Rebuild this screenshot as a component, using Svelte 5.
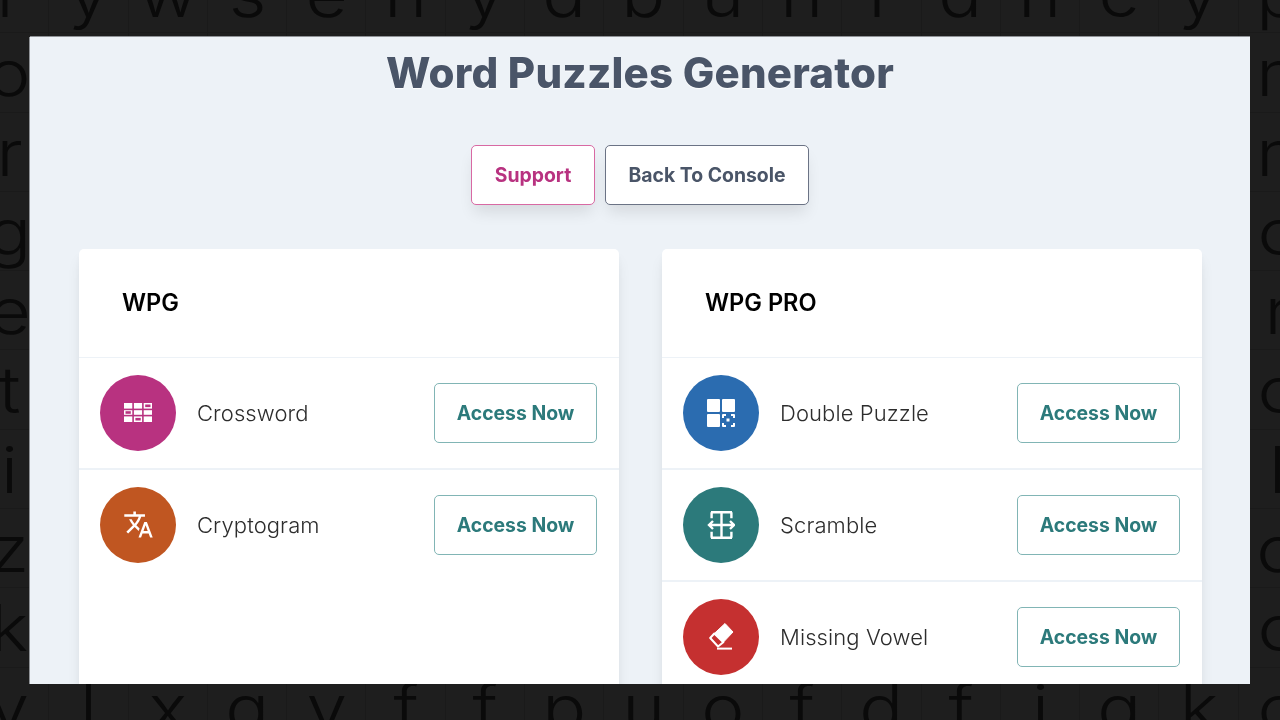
<script>
  // letter wall behind the panel, one string per row (dots are cells the panel covers)
  const wall = [
    "rywsenyabunrancyp",
    "o...............n",
    "r...............n",
    "g...............c",
    "e...............r",
    "t...............c",
    "i...............l",
    "z...............o",
    "k...............c",
    "vlxgvffpuofdfigkc"
  ];
  const letters = wall.flatMap((row) => row.split(""));

  const free = [{ name: "Crossword", color: "#b83280", icon: "crossword" }, { name: "Cryptogram", color: "#c05621", icon: "translate" }];
  const pro = [
    { name: "Double Puzzle", color: "#2b6cb0", icon: "double" },
    { name: "Scramble", color: "#2c7a7b", icon: "scramble" },
    { name: "Missing Vowel", color: "#c53030", icon: "eraser" }
  ];
  const cards = [{ title: "WPG", items: free }, { title: "WPG PRO", items: pro }];
</script>

<div class="wall" aria-hidden="true">
  {#each letters as letter}
    <span class="cell">
      {#if letter !== "."}<span class="glyph">{letter}</span>{/if}
    </span>
  {/each}
</div>

<div class="stage">
  <main class="panel">
    <h1>Word Puzzles Generator</h1>
    <div class="actions">
      <button class="btn support">Support</button>
      <button class="btn console">Back To Console</button>
    </div>
    <div class="cards">
      {#each cards as card}
        <section class="card">
          <h2>{card.title}</h2>
          {#each card.items as item}
            <div class="row">
              <span class="badge" style="background: {item.color}">
                {#if item.icon === "crossword"}
                  <svg width="28" height="19" viewBox="0 0 28 19" fill="#fff">
                    <rect x="0" y="0" width="8.3" height="5.6" />
                    <rect x="9.9" y="0" width="8.2" height="5.6" />
                    <rect x="19.7" y="0" width="8.3" height="5.6" />
                    <rect x="0" y="7.2" width="8.3" height="4.6" />
                    <rect x="9.9" y="7.2" width="8.2" height="4.6" />
                    <rect x="19.7" y="7.2" width="8.3" height="4.6" />
                    <rect x="0" y="13.4" width="8.3" height="5.6" />
                    <rect x="9.9" y="13.4" width="8.2" height="5.6" />
                    <rect x="19.7" y="13.4" width="8.3" height="5.6" />
                    <rect x="21.2" y="1.5" width="5.3" height="2.6" fill={item.color} />
                    <rect x="1.5" y="8.2" width="5.3" height="2.6" fill={item.color} />
                    <rect x="11.4" y="14.9" width="5.3" height="2.6" fill={item.color} />
                  </svg>
                {:else if item.icon === "translate"}
                  <svg width="31" height="31" viewBox="0 0 24 24" fill="#fff">
                    <path d="M12.87 15.07l-2.54-2.51.03-.03c1.74-1.94 2.98-4.17 3.71-6.53H17V4h-7V2H8v2H1v1.99h11.17C11.5 7.92 10.44 9.75 9 11.35 8.07 10.32 7.3 9.19 6.69 8h-2c.73 1.63 1.73 3.17 2.98 4.56l-5.09 5.02L4 19l5-5 3.11 3.11.76-2.04zM18.5 10h-2L12 22h2l1.12-3h4.75L21 22h2l-4.5-12zm-2.62 7l1.62-4.33L19.12 17h-3.24z" />
                  </svg>
                {:else if item.icon === "double"}
                  <svg width="28" height="28" viewBox="0 0 28 28" fill="#fff">
                    <rect x="0" y="0" width="13" height="13" rx="1" />
                    <rect x="15" y="0" width="13" height="13" rx="1" />
                    <rect x="0" y="15" width="13" height="13" rx="1" />
                    <path d="M16 15h3v2h-2v2h-2v-3a1 1 0 0 1 1-1zM24 15h3a1 1 0 0 1 1 1v3h-2v-2h-2zM15 24h2v2h2v2h-3a1 1 0 0 1-1-1zM26 24h2v3a1 1 0 0 1-1 1h-3v-2h2z" />
                    <rect x="19.5" y="19.5" width="3" height="3" />
                  </svg>
                {:else if item.icon === "scramble"}
                  <svg width="28" height="28" viewBox="0 0 28 28" fill="none" stroke="#fff" stroke-width="2.4">
                    <path d="M4 1.2h21M4 26.8h21M14.5 1.2v25.6M4.6 1.2v6M24.4 1.2v6M4.6 20.8v6M24.4 20.8v6" />
                    <path d="M2 14h25M6 10l-4 4 4 4M23 10l4 4-4 4" />
                  </svg>
                {:else}
                  <svg width="25" height="27" viewBox="0 0 25 27" fill="none" stroke="#fff">
                    <path d="M16 .5L24 9 14.3 19.3 5.3 10.5z" fill="#fff" stroke-width="1" stroke-linejoin="round" />
                    <path d="M5.3 10.5L1.2 15 9 23.5l5.3-4.2z" stroke-width="2" stroke-linejoin="round" />
                    <path d="M8 25.6h15" stroke-width="2" />
                  </svg>
                {/if}
              </span>
              <span class="name">{item.name}</span>
              <button class="btn access">Access Now</button>
            </div>
          {/each}
        </section>
      {/each}
    </div>
  </main>
</div>

<style>
  :global(body) {
    margin: 0;
    background: #1e1e1e;
    overflow: hidden;
    font-family: Inter, "Open Sans", sans-serif;
  }

  .wall {
    position: fixed;
    left: -30px;
    top: -46px;
    display: grid;
    grid-template-columns: repeat(17, 79.3px);
    grid-auto-rows: 79.3px;
  }

  .cell {
    box-sizing: border-box;
    border-right: 1px solid #1a1a1a;
    border-bottom: 1px solid #1a1a1a;
    text-align: center;
    font-size: 64px;
    font-weight: 300;
    line-height: 79px;
    color: #0a0a0a;
    font-feature-settings: "cv11";
  }

  .glyph {
    display: inline-block;
    transform: scaleX(1.14);
  }

  .stage {
    position: relative;
    box-sizing: border-box;
    height: 720px;
    padding: 37px 30px 36px;
  }

  .panel {
    height: 100%;
    overflow: hidden;
    background: #edf2f7;
    box-shadow: 0 -1px 0 #8f9296, -1px 0 0 #8f9296;
  }

  h1 {
    margin: 0;
    padding-top: 8px;
    text-align: center;
    font-size: 42px;
    line-height: 56px;
    font-weight: 800;
    letter-spacing: 0.2px;
    color: #4a5568;
    text-shadow: 0 1px 1px #fff;
  }

  .actions {
    display: flex;
    justify-content: center;
    gap: 10px;
    margin-top: 44px;
  }

  .btn {
    box-sizing: border-box;
    height: 60px;
    padding: 0;
    background: #fff;
    border: 1px solid;
    border-radius: 5px;
    font-family: inherit;
    font-size: 19.4px;
    font-weight: 700;
  }

  .support {
    width: 124px;
    color: #b83280;
    border-color: #d869a3;
    box-shadow: 0 10px 15px -3px rgba(0, 0, 0, 0.1);
  }

  .console {
    width: 204px;
    color: #4a5568;
    border-color: #6b7385;
    box-shadow: 0 10px 15px -3px rgba(0, 0, 0, 0.1);
  }

  .cards {
    display: grid;
    grid-template-columns: 540px 540px;
    gap: 43px;
    padding: 0 49px;
    margin-top: 44px;
  }

  .card {
    min-height: 500px;
    background: #fff;
    border-radius: 5px;
    box-shadow: 0 10px 15px -3px rgba(0, 0, 0, 0.1), 0 4px 6px -2px rgba(0, 0, 0, 0.05);
  }

  h2 {
    box-sizing: border-box;
    height: 109px;
    margin: 0;
    padding: 0 43px;
    border-bottom: 1px solid #edf2f7;
    font-size: 23.6px;
    font-weight: 600;
    line-height: 107px;
    color: #000;
  }

  .row {
    box-sizing: border-box;
    display: flex;
    align-items: center;
    height: 112px;
    padding: 0 22px 1px 21px;
    border-bottom: 2px solid #edf2f7;
  }

  .row:last-child {
    border-bottom: 0;
    height: 110px;
  }

  .badge {
    display: flex;
    align-items: center;
    justify-content: center;
    flex: none;
    width: 76px;
    height: 76px;
    border-radius: 50%;
  }

  .name {
    flex: 1;
    margin-left: 21px;
    font-size: 22px;
    font-weight: 300;
    letter-spacing: 0.1px;
    color: #2d2d2d;
  }

  .access {
    width: 163px;
    color: #2c7a7b;
    border-color: #81b5b5;
  }
</style>
